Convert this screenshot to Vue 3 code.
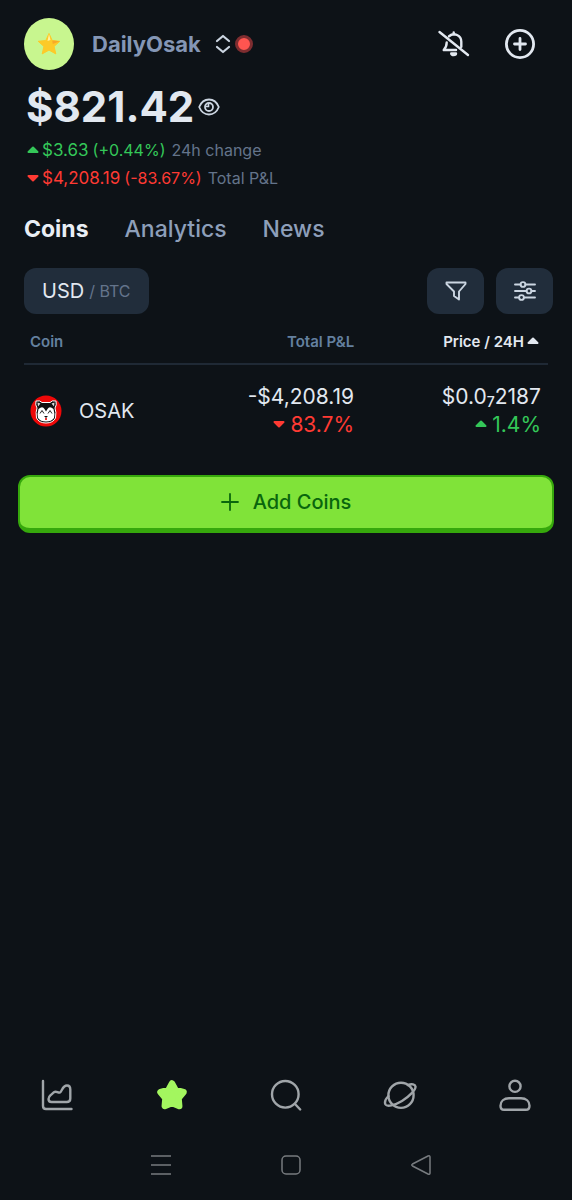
<script setup>
import { ref } from 'vue'

const tabs = ['Coins', 'Analytics', 'News']
const activeTab = ref('Coins')
const coins = [
  { symbol: 'OSAK', pnl: '-$4,208.19', pnlPct: '83.7%', lead: '$0.0', zeros: '7', tail: '2187', change: '1.4%' },
]
</script>

<template>
  <div class="app">
    <header class="top">
      <button class="account" type="button">
        <span class="avatar">
          <svg width="26" height="26" viewBox="0 0 26 26" aria-hidden="true">
            <path d="M13 2.5l3.2 7 7.6.8-5.7 5.1 1.7 7.5L13 19.1l-6.8 3.8 1.7-7.5-5.7-5.1 7.6-.8z" fill="#fdca28" stroke="#fdca28" stroke-linejoin="round" />
            <path d="M16.200 9.500l7.600.8-7 2.700z" fill="#f7a928" />
            <path d="M13 3l1.500 6-3 1z" fill="#fff3a0" />
          </svg>
        </span>
        <span class="name">DailyOsak</span>
        <svg class="chevrons" width="16" height="20" viewBox="0 0 16 20" fill="none" stroke="#cbd5e1" stroke-width="2.200" stroke-linecap="round" stroke-linejoin="round" aria-hidden="true">
          <path d="M2 7l6-5 6 5M2 13l6 5 6-5" />
        </svg>
        <span class="dot"></span>
      </button>
      <div class="actions">
        <button type="button" aria-label="Notifications off">
          <svg width="34" height="34" viewBox="0 0 34 34" fill="none" stroke="#e2e8f0" stroke-width="2.400" stroke-linecap="round" stroke-linejoin="round" aria-hidden="true">
            <path d="M2.500 5L31 28M16.700 5.500v2M12 9.200c5-4 12.300-1 12.300 5.500v5M9.700 15.500c0 3.500-.7 5-3 7.500H19" />
            <path d="M14.200 26.500h4.800c0 2-4.800 2-4.800 0z" fill="#e2e8f0" />
          </svg>
        </button>
        <button type="button" aria-label="Add">
          <svg width="34" height="34" viewBox="0 0 34 34" fill="none" stroke="#e2e8f0" stroke-width="2.800" stroke-linecap="round" aria-hidden="true">
            <circle cx="17" cy="17" r="13.600" />
            <path d="M17 11.500v11M11.500 17h11" />
          </svg>
        </button>
      </div>
    </header>

    <section class="summary">
      <div class="balance">
        <h1>$821.42</h1>
        <button type="button" aria-label="Hide balance">
          <svg width="22" height="18" viewBox="0 0 22 18" fill="none" stroke="#cbd5e1" stroke-width="1.800" aria-hidden="true">
            <path d="M1.200 9C3 4.500 6.500 1.500 11 1.500S19 4.500 20.800 9C19 13.500 15.500 16.500 11 16.500S3 13.500 1.200 9z" />
            <circle cx="11" cy="9" r="4" />
            <path d="M10.500 5v3.500H7.500" stroke-width="1.600" />
          </svg>
        </button>
      </div>
      <p class="stat up">
        <svg class="tri" width="12" height="8" viewBox="0 0 12 8" aria-hidden="true"><path d="M6 1.500l4.500 4.500h-9z" /></svg>
        <span class="amount">$3.63</span><span class="pct">(+0.44%)</span><span class="label">24h change</span>
      </p>
      <p class="stat down">
        <svg class="tri" width="12" height="8" viewBox="0 0 12 8" aria-hidden="true"><path d="M6 6.500L1.500 2h9z" /></svg>
        <span class="amount">$4,208.19</span><span class="pct">(-83.67%)</span><span class="label">Total P&amp;L</span>
      </p>
    </section>

    <nav class="tabs">
      <button v-for="t in tabs" :key="t" type="button" :class="{ active: t === activeTab }" @click="activeTab = t">{{ t }}</button>
    </nav>

    <div class="tools">
      <button class="currency" type="button"><span class="usd">USD</span><span class="btc">/ BTC</span></button>
      <button class="tool" type="button" aria-label="Filter">
        <svg width="24" height="24" viewBox="0 0 24 24" fill="none" stroke="#cbd5e1" stroke-width="1.900" stroke-linejoin="round" aria-hidden="true">
          <path d="M2.500 3.500h19v1.500L15 12.500v8L10 17v-4.500L2.500 5z" />
        </svg>
      </button>
      <button class="tool" type="button" aria-label="Customize">
        <svg width="24" height="24" viewBox="0 0 24 24" fill="none" stroke="#cbd5e1" stroke-width="1.900" stroke-linecap="round" aria-hidden="true">
          <path d="M2 5.500h5.500M12.500 5.500H22M2 12h11.500M18.500 12H22M2 18.500h4M11 18.500h11" />
          <circle cx="10" cy="5.500" r="2.400" /><circle cx="16" cy="12" r="2.400" /><circle cx="8.500" cy="18.500" r="2.400" />
        </svg>
      </button>
    </div>

    <table class="coins">
      <thead>
        <tr>
          <th scope="col">Coin</th>
          <th scope="col">Total P&amp;L</th>
          <th scope="col" class="sorted">Price / 24H<svg class="tri" width="12" height="8" viewBox="0 0 12 8" aria-hidden="true"><path d="M6 1.500l4.500 4.500h-9z" /></svg></th>
        </tr>
      </thead>
      <tbody>
        <tr v-for="c in coins" :key="c.symbol">
          <td>
            <div class="coin">
              <svg width="32" height="32" viewBox="0 0 32 32" aria-hidden="true">
                <circle cx="16" cy="16" r="15.500" fill="#ee0808" />
                <path d="M6 6q4-1 6 1.500h8q2-2.500 6-1.500 1 4-1 7 1.500 4 .5 10-2.500 5-9.500 5t-9.500-5q-1-6 .5-10-2-3-1-7z" fill="#111" stroke="#fff" stroke-width="1" stroke-linejoin="round" />
                <path d="M7.500 7.500l3 1-2.500 3zM24.500 7.500l-3 1 2.500 3z" fill="#ddd" />
                <path d="M8.500 14q4-3.500 6 0l1.500 2.500 1.500-2.500q2-3.500 6 0 1.500 5 .5 9-2.500 3.500-8 3.500t-8-3.500q-1-4 .5-9z" fill="#fff" />
                <path d="M10 18.500l2-3 2 3M18 18.500l2-3 2 3" fill="none" stroke="#222" />
                <path d="M14 21h4l-2 2z" fill="#111" /><path d="M15 23h2v2h-2z" fill="#e33" />
              </svg>
              <span>{{ c.symbol }}</span>
            </div>
          </td>
          <td>
            <div>{{ c.pnl }}</div>
            <div class="down"><svg class="tri" width="12" height="8" viewBox="0 0 12 8" aria-hidden="true"><path d="M6 6.500L1.500 2h9z" /></svg>{{ c.pnlPct }}</div>
          </td>
          <td>
            <div>{{ c.lead }}<sub>{{ c.zeros }}</sub>{{ c.tail }}</div>
            <div class="up"><svg class="tri" width="12" height="8" viewBox="0 0 12 8" aria-hidden="true"><path d="M6 1.500l4.500 4.500h-9z" /></svg>{{ c.change }}</div>
          </td>
        </tr>
      </tbody>
    </table>

    <button class="add" type="button">
      <svg width="18" height="18" viewBox="0 0 18 18" stroke="#09660d" stroke-width="1.800" stroke-linecap="round" aria-hidden="true"><path d="M9 1v16M1 9h16" /></svg>
      Add Coins
    </button>

    <footer class="bottom">
      <nav class="bar">
        <a href="#market" aria-label="Market">
          <svg width="34" height="34" viewBox="0 0 34 34"><path d="M3 3v25q0 3 3 3h25.500" /><path d="M8.500 21c0-2 1.200-3 2.500-4.200l3-2.600c2.500-1.800 4 1.300 6 .3 2-1.200 2.500-7 7-7 2.500 0 3.300 2 3.300 4v9c0 2-1 3.500-3.500 3.500H11.500c-2 0-3-1.200-3-3z" /></svg>
        </a>
        <a href="#portfolio" aria-label="Portfolio" class="current">
          <svg width="34" height="34" viewBox="0 0 34 34"><path d="M17 5.500l3.500 6.500 8 2.200-5 6 .7 7.800L17 25l-7.200 3 .7-7.800-5-6 8-2.200z" /></svg>
        </a>
        <a href="#search" aria-label="Search">
          <svg width="34" height="34" viewBox="0 0 34 34"><circle cx="16.300" cy="16.300" r="13.300" /><path d="M26 26l5.200 5.500" /></svg>
        </a>
        <a href="#explore" aria-label="Explore">
          <svg width="34" height="34" viewBox="0 0 34 34"><circle cx="18" cy="17.300" r="12.600" /><path d="M25 7c4-1.500 7-.5 7.500 1.500.5 3-6 10-13.500 14.500S4 29 2.500 26.500C1.500 24.500 2 21.500 5.500 18" /></svg>
        </a>
        <a href="#profile" aria-label="Profile">
          <svg width="34" height="34" viewBox="0 0 34 34"><circle cx="17" cy="8.300" r="5.600" /><path d="M11 20.300h12c5 0 8.500 3 8.500 7.500 0 2.500-1 4-3.500 4H6c-2.500 0-3.500-1.500-3.500-4 0-4.500 3.500-7.500 8.500-7.500z" /></svg>
        </a>
      </nav>
      <div class="system">
        <button type="button" aria-label="Recent apps"><svg width="22" height="22" viewBox="0 0 22 22"><path d="M1 2h20M1 11h20M1 20h20" /></svg></button>
        <button type="button" aria-label="Home"><svg width="22" height="22" viewBox="0 0 22 22"><rect x="2" y="2" width="18" height="18" rx="4" /></svg></button>
        <button type="button" aria-label="Back"><svg width="22" height="22" viewBox="0 0 22 22"><path d="M2.500 10L18 2q2-.8 2 1v16q0 1.800-2 1L2.500 12q-1.500-1 0-2z" /></svg></button>
      </div>
    </footer>
  </div>
</template>

<style>
body { background: #0d1217; }
</style>

<style scoped>
.app { min-height: 100vh; box-sizing: border-box; padding: 16px 18px 0; display: flex; flex-direction: column; background: #0d1217; color: #e2e8f0; font-family: Inter, sans-serif; }
button { font: inherit; color: inherit; background: none; border: 0; padding: 0; cursor: pointer; }
svg { display: block; flex: none; }
.tri { fill: currentColor; stroke: currentColor; stroke-width: 2; stroke-linejoin: round; }
.up { color: #34c759; }
.down { color: #ff3a33; }
.top { display: flex; justify-content: space-between; align-items: center; height: 55px; padding: 0 17px 0 6px; }
.account { display: flex; align-items: center; }
.avatar { width: 50px; height: 52px; border-radius: 50%; background: #c8f68f; display: grid; place-items: center; }
.name { margin-left: 18px; font-size: 22px; font-weight: 700; color: #8496b5; }
.chevrons { margin-left: 14px; }
.dot { box-sizing: border-box; width: 18px; height: 18px; margin-left: 4px; border-radius: 50%; background: #ff5550; border: 3px solid #7e2d30; }
.actions { display: flex; gap: 32px; }
.summary { padding: 0 8px; }
.balance { display: flex; align-items: center; gap: 4px; height: 65px; padding-top: 7px; box-sizing: border-box; }
h1 { margin: 0; font-size: 42px; line-height: 54px; font-weight: 700; }
.stat { display: flex; align-items: center; height: 28px; margin: 0; font-size: 17px; }
.stat .tri { margin: 0 3px 0 1px; }
.pct { margin-left: 4px; font-size: 16px; }
.label { margin-left: 6px; font-size: 16px; color: #64748b; }
.tabs { display: flex; gap: 36px; padding: 0 6px; margin-top: 22px; font-size: 23px; line-height: 30px; font-weight: 500; color: #8d9fba; }
.tabs .active { color: #e9eef5; font-weight: 700; }
.tools { display: flex; gap: 12px; margin: 24px 1px 0 6px; }
.tools button { height: 46px; border-radius: 12px; background: #212d3b; }
.currency { display: flex; align-items: center; gap: 5px; padding: 0 18px; margin-right: auto; }
.usd { font-size: 20px; }
.btc { font-size: 16px; color: #64748b; }
.tools .tool { width: 57px; display: grid; place-items: center; }
.coins { border-collapse: collapse; margin: 8px 6px 0; table-layout: fixed; }
th { height: 39px; padding: 0 0 2px; border-bottom: 2px solid #1f2935; font-size: 15px; font-weight: 600; color: #64809f; text-align: right; }
th:first-child { text-align: left; padding-left: 6px; }
th.sorted { width: 37%; color: #e2e8f0; padding-right: 9px; }
th .tri { display: inline-block; margin-left: 3px; vertical-align: 2px; }
td { padding: 18px 0 22px; font-size: 21px; line-height: 28px; text-align: right; }
td:first-child { padding-left: 6px; text-align: left; }
td:last-child { padding-right: 7px; }
td .tri { display: inline-block; margin-right: 5px; vertical-align: 4px; }
sub { font-size: 14px; line-height: 1; font-weight: 500; vertical-align: -3px; }
.coin { display: flex; align-items: center; gap: 17px; font-size: 20px; }
.add { display: flex; align-items: center; justify-content: center; gap: 14px; height: 58px; margin-top: 14px; padding-bottom: 1px; border: 2px solid #36a80c; border-bottom-width: 5px; border-radius: 12px; background: #80e339; color: #09660d; font-size: 20px; font-weight: 500; }
.bottom { margin: auto -18px 0; }
.bar { display: flex; }
.bar a { flex: 1; display: flex; justify-content: center; }
.bar svg { fill: none; stroke: #a0a5a9; stroke-width: 2.400; stroke-linecap: round; stroke-linejoin: round; }
.bar .current svg { fill: #a3f65f; stroke: #a3f65f; stroke-width: 6.500; }
.system { display: flex; justify-content: center; gap: 108px; padding: 42px 0 24px 10px; }
.system svg { fill: none; stroke: #777b7f; stroke-width: 1.500; }
</style>
